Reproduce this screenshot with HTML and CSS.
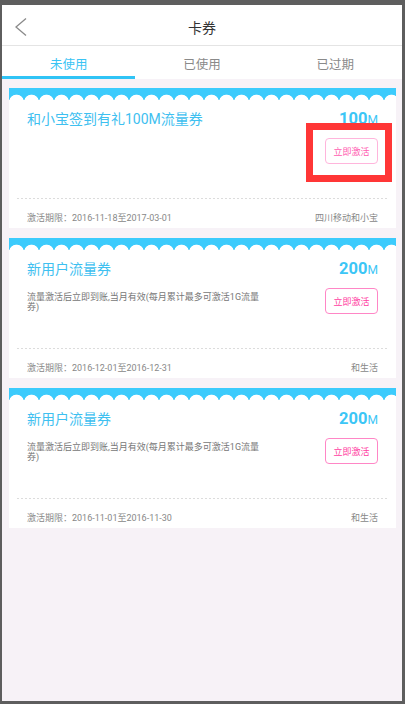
FILE: index.html
```html
<!DOCTYPE html>
<html lang="zh-CN">
<head>
<meta charset="utf-8">
<title>卡券</title>
<link rel="stylesheet" href="styles.css">
</head>
<body>
<div class="app">
  <header class="topbar">
    <svg class="back" viewBox="0 0 12 18" width="12" height="18"><path d="M11 0.5 L1 9 L11 17.5" fill="none" stroke="#8a8a8a" stroke-width="1.3"/></svg>
    <h1 class="title">卡券</h1>
    <span></span>
  </header>
  <nav class="tabs">
    <div class="tab active">未使用</div>
    <div class="tab">已使用</div>
    <div class="tab">已过期</div>
  </nav>
  <main class="list">
    <section class="card">
      <div class="band"></div>
      <div class="main">
        <div class="row1"><span class="name">和小宝签到有礼100M流量券</span><span class="amount"><b>100</b>M</span></div>
        <div class="row2"><p class="desc"></p><button class="btn faint">立即激活</button></div>
      </div>
      <div class="dash"></div>
      <div class="foot"><span>激活期限：2016-11-18至2017-03-01</span><span>四川移动和小宝</span></div>
      <div class="mark"></div>
    </section>
    <section class="card">
      <div class="band"></div>
      <div class="main">
        <div class="row1"><span class="name">新用户流量券</span><span class="amount"><b>200</b>M</span></div>
        <div class="row2"><p class="desc">流量激活后立即到账,当月有效(每月累计最多可激活1G流量券)</p><button class="btn">立即激活</button></div>
      </div>
      <div class="dash"></div>
      <div class="foot"><span>激活期限：2016-12-01至2016-12-31</span><span>和生活</span></div>
    </section>
    <section class="card">
      <div class="band"></div>
      <div class="main">
        <div class="row1"><span class="name">新用户流量券</span><span class="amount"><b>200</b>M</span></div>
        <div class="row2"><p class="desc">流量激活后立即到账,当月有效(每月累计最多可激活1G流量券)</p><button class="btn">立即激活</button></div>
      </div>
      <div class="dash"></div>
      <div class="foot"><span>激活期限：2016-11-01至2016-11-30</span><span>和生活</span></div>
    </section>
  </main>
</div>
</body>
</html>
```
FILE: styles.css
```css
html, body {
  margin: 0;
  height: 704px;
  overflow: hidden;
  background: #5e5e5e;
}
body {
  padding: 5px 0 0 2px;
  box-sizing: border-box;
}
.app {
  width: 400px;
  height: 696px;
  background: #f7f2f7;
  font-family: Roboto, "Noto Sans CJK SC", sans-serif;
}
.topbar {
  height: 40px;
  background: #fff;
  border-bottom: 1px solid #e4e4e4;
  display: grid;
  grid-template-columns: 1fr auto 1fr;
  align-items: center;
}
.back {
  display: block;
  margin: 3px 0 0 13px;
}
.title {
  margin: 0;
  padding-top: 3px;
  font-size: 14px;
  font-weight: normal;
  color: #333;
}
.tabs {
  display: flex;
  height: 33px;
  background: #fff;
}
.tab {
  flex: 1;
  display: flex;
  align-items: center;
  justify-content: center;
  box-sizing: border-box;
  padding-top: 1px;
  font-size: 12.5px;
  color: #8a8a8a;
}
.tab.active {
  color: #3ac4f4;
  border-bottom: 3px solid #30c4f6;
  padding-top: 4px;
}
.list {
  padding: 9px 6px 0 7px;
  display: flex;
  flex-direction: column;
  gap: 10px;
}
.card {
  position: relative;
  background: #fff;
}
.band {
  height: 12px;
  background-color: #3ccbfc;
  background-image: radial-gradient(circle at 50% 14px, #fff 7px, rgba(255,255,255,0) 7.7px);
  background-size: 15px 12px;
  background-repeat: repeat-x;
}
.main {
  height: 98px;
  box-sizing: border-box;
  padding: 9px 18px 0 18px;
}
.row1 {
  display: flex;
  justify-content: space-between;
  align-items: baseline;
  height: 20px;
  line-height: 20px;
}
.name {
  font-size: 14px;
  color: #3ec0f0;
}
.amount {
  font-size: 12px;
  color: #3cc6f6;
}
.amount b {
  font-size: 16.5px;
  font-weight: bold;
}
.row2 {
  display: flex;
  justify-content: space-between;
  align-items: flex-start;
  margin-top: 9px;
}
.desc {
  margin: 4px 0 0;
  width: 236px;
  font-size: 9px;
  line-height: 10px;
  color: #777;
}
.btn {
  width: 53px;
  height: 26px;
  padding: 0;
  border: 1px solid #ff86c6;
  border-radius: 4px;
  background: #fff;
  color: #ff3da2;
  font-family: inherit;
  font-size: 9px;
}
.btn.faint {
  border-color: #ffb5dc;
  color: #ff5cb1;
}
.dash {
  height: 1px;
  margin: 0 8px;
  background: repeating-linear-gradient(90deg, #dcdcdc 0 2px, transparent 2px 4px);
}
.foot {
  height: 29px;
  box-sizing: border-box;
  padding: 13px 18px 0;
  display: flex;
  justify-content: space-between;
  font-size: 9px;
  line-height: 12px;
  color: #888;
}
.mark {
  position: absolute;
  left: 297px;
  top: 35px;
  width: 86px;
  height: 59px;
  box-sizing: border-box;
  border: 7px solid #ff3636;
}
```
